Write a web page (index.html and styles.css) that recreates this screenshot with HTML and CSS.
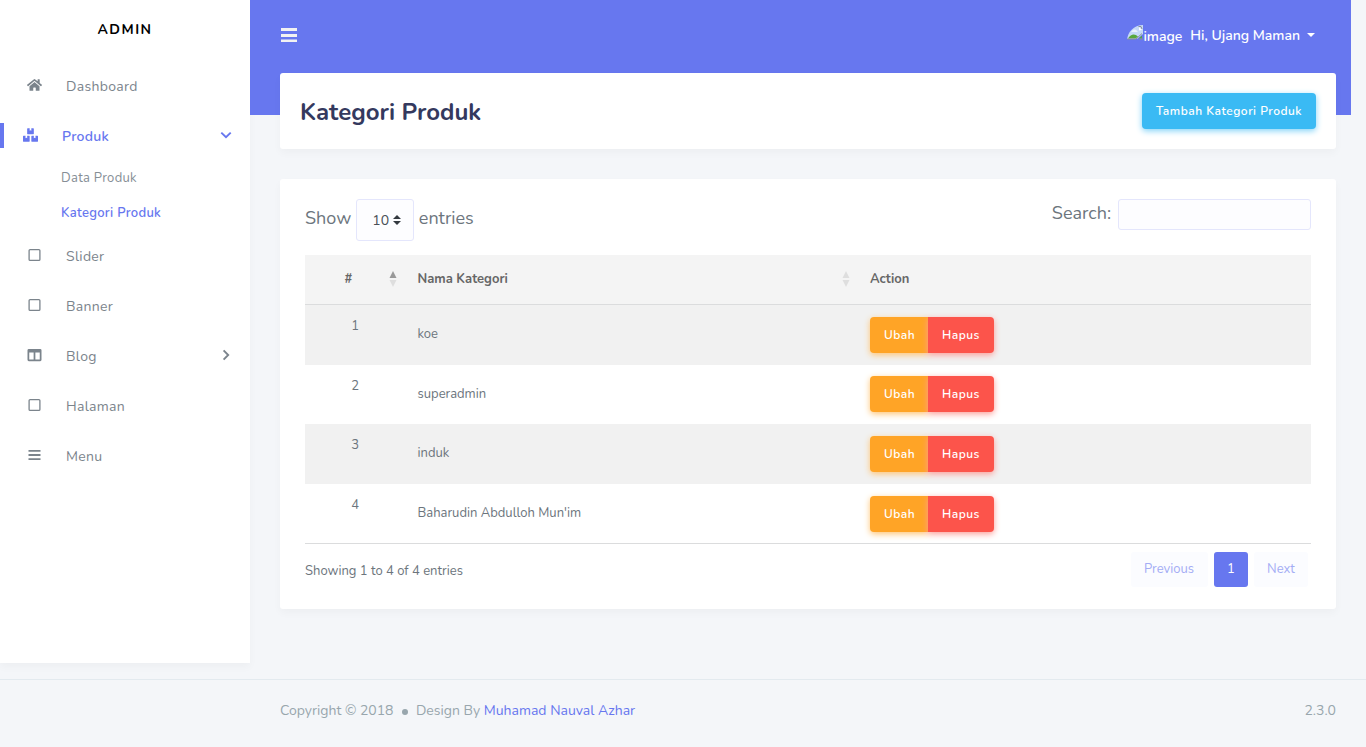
FILE: index.html
```html
<!DOCTYPE html>
<html lang="id">
<head>
<meta charset="utf-8">
<title>Kategori Produk</title>
<link rel="stylesheet" href="styles.css">
</head>
<body>
<div class="shell">
  <aside class="sidebar">
    <a class="brand">ADMIN</a>
    <nav class="menu">
      <a class="item"><svg class="icon" viewBox="0 0 576 512"><path d="M280 148 96 300v164a16 16 0 0 0 16 16h112a16 16 0 0 0 16-16v-96a16 16 0 0 1 16-16h64a16 16 0 0 1 16 16v96a16 16 0 0 0 16 16h112a16 16 0 0 0 16-16V300L296 148a12 12 0 0 0-16 0zM572 251l-84-69V44a12 12 0 0 0-12-12h-56a12 12 0 0 0-12 12v72l-90-74a48 48 0 0 0-61 0L4 251a12 12 0 0 0-1 17l25 31a12 12 0 0 0 17 2L280 107a12 12 0 0 1 15 0l236 194a12 12 0 0 0 17-2l25-31a12 12 0 0 0-1-17z"/></svg><span>Dashboard</span></a>
      <a class="item active"><svg class="icon" viewBox="0 0 576 512"><path d="M560 288h-80v96l-32-21-32 21v-96h-80a16 16 0 0 0-16 16v192a16 16 0 0 0 16 16h224a16 16 0 0 0 16-16V304a16 16 0 0 0-16-16zM176 224h224a16 16 0 0 0 16-16V16a16 16 0 0 0-16-16h-80v96l-32-21-32 21V0h-80a16 16 0 0 0-16 16v192a16 16 0 0 0 16 16zm64 64h-80v96l-32-21-32 21v-96H16a16 16 0 0 0-16 16v192a16 16 0 0 0 16 16h224a16 16 0 0 0 16-16V304a16 16 0 0 0-16-16z"/></svg><span>Produk</span><svg class="caret" viewBox="0 0 12 12"><path d="M1.3 3.6 6 8.2l4.7-4.6"/></svg></a>
      <a class="subitem">Data Produk</a>
      <a class="subitem current">Kategori Produk</a>
      <a class="item"><svg class="icon" viewBox="0 0 14 14"><rect class="line" x="1.6" y="1.6" width="10.8" height="10.8" rx="1"/></svg><span>Slider</span></a>
      <a class="item"><svg class="icon" viewBox="0 0 14 14"><rect class="line" x="1.6" y="1.6" width="10.8" height="10.8" rx="1"/></svg><span>Banner</span></a>
      <a class="item"><svg class="icon" viewBox="0 0 512 512"><path fill-rule="evenodd" d="M464 32H48a48 48 0 0 0-48 48v352a48 48 0 0 0 48 48h416a48 48 0 0 0 48-48V80a48 48 0 0 0-48-48zM224 416H64V160h160zm224 0H288V160h160z"/></svg><span>Blog</span><svg class="caret" viewBox="0 0 12 12"><path d="M3.6 1.3 8.2 6l-4.6 4.7"/></svg></a>
      <a class="item"><svg class="icon" viewBox="0 0 14 14"><rect class="line" x="1.6" y="1.6" width="10.8" height="10.8" rx="1"/></svg><span>Halaman</span></a>
      <a class="item"><svg class="icon" viewBox="0 0 14 14"><path d="M1 2h12v1.8H1zM1 6.1h12v1.8H1zM1 10.2h12V12H1z"/></svg><span>Menu</span></a>
    </nav>
  </aside>
  <main class="main">
    <header class="topbar">
      <svg class="burger" viewBox="0 0 18 16"><path d="M1 1h16v3H1zM1 7h16v3H1zM1 12.5h16v2.6H1z"/></svg>
      <div class="user">
        <svg class="avatar" viewBox="0 0 16 16"><defs><clipPath id="round"><path d="M16 0v16H0C0 7 7 0 16 0z"/></clipPath></defs><g clip-path="url(#round)"><path fill="#c5d9f7" d="M0 0h16v9l-6 5H0z"/><path fill="#e9f1fc" d="M5 6c1-2 4-2 5 0l1 1H4z"/><path fill="#57a83c" d="M1 13.5c3-5 7-5 10-2l-2.500 2zM12 13.500l3-3v3z"/><path fill="none" stroke="#8a9099" d="M0 14h9l6-5.500M12 14h4M11.500 1.500h2.500L15 4"/><path fill="#fff" d="m12 2 3 3-3 .5z"/></g></svg><span class="alt">image</span><span class="hello">Hi, Ujang Maman</span><i class="down"></i>
      </div>
    </header>
    <section class="card heading">
      <h1>Kategori Produk</h1>
      <a class="btn info">Tambah Kategori Produk</a>
    </section>
    <section class="card panel">
      <div class="tools">
        <div class="length"><span class="word">Show</span><span class="select"><span>10</span><svg class="updown" viewBox="0 0 8 10"><path d="M4 0l4 4H0zM4 10 0 6h8z"/></svg></span><span class="word">entries</span></div>
        <label class="search"><span>Search:</span><input type="text" class="field"></label>
      </div>
      <table class="grid">
        <thead><tr>
          <th class="num"><div class="headcell"><span>#</span><svg class="sort asc" viewBox="0 0 8 16"><path d="M4 0l3.5 7h-7z"/><path d="M4 16 .5 9h7z"/></svg></div></th>
          <th class="name"><div class="headcell"><span>Nama Kategori</span><svg class="sort" viewBox="0 0 8 16"><path d="M4 0l3.5 7h-7z"/><path d="M4 16 .5 9h7z"/></svg></div></th>
          <th>Action</th>
        </tr></thead>
        <tbody>
          <tr><td class="index">1</td><td class="label">koe</td><td><div class="group"><a class="btn warning">Ubah</a><a class="btn danger">Hapus</a></div></td></tr>
          <tr><td class="index">2</td><td class="label">superadmin</td><td><div class="group"><a class="btn warning">Ubah</a><a class="btn danger">Hapus</a></div></td></tr>
          <tr><td class="index">3</td><td class="label">induk</td><td><div class="group"><a class="btn warning">Ubah</a><a class="btn danger">Hapus</a></div></td></tr>
          <tr><td class="index">4</td><td class="label">Baharudin Abdulloh Mun'im</td><td><div class="group"><a class="btn warning">Ubah</a><a class="btn danger">Hapus</a></div></td></tr>
        </tbody>
      </table>
      <div class="below">
        <span class="summary">Showing 1 to 4 of 4 entries</span>
        <div class="pages"><a class="page prev">Previous</a><a class="page on">1</a><a class="page next">Next</a></div>
      </div>
    </section>
  </main>
</div>
<footer class="footer">
  <div class="credit"><span>Copyright © 2018</span><i class="bullet"></i><span>Design By</span><a class="author">Muhamad Nauval Azhar</a></div>
  <span>2.3.0</span>
</footer>
</body>
</html>
```

FILE: styles.css
```css
* { box-sizing: border-box; }
html { overflow: hidden; }
body { margin: 0; background: #f4f6f9; color: #6c757d; font: 400 14px/24px Nunito, Lato, sans-serif; white-space: nowrap; }
.shell { display: flex; height: 679px; }

.sidebar { width: 250px; height: 663px; background: #fff; box-shadow: 0 4px 8px rgba(0,0,0,.03); }
.brand { display: block; height: 61px; line-height: 59px; text-align: center; font-size: 14px; font-weight: 700; letter-spacing: 1.5px; color: #000; }
.menu { display: flex; flex-direction: column; }
.item { display: flex; align-items: center; height: 50px; padding: 0 18px 0 27px; color: #7b848c; letter-spacing: .3px; }
.item span { padding-top: 2px; }
.icon { width: 15px; height: 14px; margin: 0 24px 2px 0; fill: currentColor; overflow: visible; }
.line { fill: none; stroke: currentColor; stroke-width: 1.3; }
.caret { width: 12px; height: 12px; margin: 0 0 2px auto; fill: none; stroke: currentColor; stroke-width: 1.9; }
.active { padding-left: 0; color: #6777ef; font-weight: 600; }
.active::before { content: ""; width: 4px; height: 25px; margin: 0 19px 2px 0; background: #6777ef; }
.subitem { height: 35px; padding-left: 61px; font-size: 13px; line-height: 35px; color: #868e96; letter-spacing: .3px; }
.current { color: #6777ef; font-weight: 600; }

.main { width: 1116px; padding: 0 30px; background: linear-gradient(#6777ef, #6777ef) 0 0 / 1101px 115px no-repeat; }
.topbar { display: flex; justify-content: space-between; height: 73px; padding-right: 21px; color: #fff; }
.burger { width: 18px; height: 16px; margin-top: 27px; fill: #f2f2f2; }
.user { display: flex; height: 70px; align-items: center; font-weight: 600; }
.avatar { width: 16px; height: 16px; margin-bottom: 5px; }
.alt { margin-right: 8px; padding-top: 3px; }
.hello { padding-top: 1px; }
.down { margin-left: 7px; border: 4px solid transparent; border-top-color: #fff; border-bottom: 0; }
.card { background: #fff; border-radius: 3px; box-shadow: 0 4px 8px rgba(0,0,0,.03); }
.heading { display: flex; align-items: center; justify-content: space-between; height: 76px; padding: 0 20px; }
h1 { margin: 0; padding-top: 2px; font-size: 24px; line-height: 28px; font-weight: 700; color: #34395e; }
.btn { height: 36px; border-radius: 4px; font-size: 12px; line-height: 36px; font-weight: 600; letter-spacing: .5px; text-align: center; color: #fff; }
.info { width: 174px; background: #3abaf4; box-shadow: 0 2px 6px #82d3f8; }
.warning { width: 58px; padding-left: 1px; background: #ffa426; box-shadow: 0 2px 6px #ffc473; border-radius: 4px 0 0 4px; }
.danger { width: 66px; background: #fc544b; box-shadow: 0 2px 6px #fd9b96; border-radius: 0 4px 4px 0; }

.panel { height: 430px; margin-top: 30px; padding: 20px 25px; }
.tools { display: flex; justify-content: space-between; height: 56px; font-size: 18px; }
.length { display: flex; align-items: center; height: 42px; }
.word { padding-bottom: 4px; }
.select { display: flex; align-items: center; width: 58px; height: 42px; margin: 0 4.5px 0 5px; padding: 2px 0 0 15px; gap: 4px; font-size: 14px; color: #495057; background: #fdfdff; border: 1px solid #e4e6fc; border-radius: 3px; }
.updown { width: 8px; height: 10px; margin-bottom: 2px; fill: #343a40; }
.search { display: flex; gap: 7px; line-height: 28px; }
.field { width: 193px; height: 31px; background: #fdfdff; border: 1px solid #e4e6fc; border-radius: 3px; }
.grid { width: 100%; table-layout: fixed; border-collapse: separate; border-spacing: 0; border-bottom: 1px solid #dbdcdd; font-size: 13px; line-height: 20px; }
.grid th { height: 50px; padding: 0 12px 1px; text-align: left; font-weight: 700; color: #666; background: #f4f4f4; border-bottom: 1px solid #dbdcdd; }
.grid .num { width: 100.5px; padding-left: 39.5px; padding-right: 8.5px; }
.grid .name { width: 452.5px; padding-right: 8.5px; }
.headcell { display: flex; align-items: center; justify-content: space-between; }
.sort { width: 8px; height: 16px; fill: #dedede; }
.asc path:first-child { fill: #999; }
.grid td { height: 59.6px; padding: 0 12px; vertical-align: middle; }
.grid td.index { padding: 11px 0 0; text-align: center; vertical-align: top; }
.grid td.label { padding-bottom: 1.4px; }
.grid tr:nth-child(odd) td { background: #f1f1f1; }
.group { display: flex; }
.below { display: flex; justify-content: space-between; padding-top: 8px; font-size: 13px; }
.summary { padding-top: 7px; }
.pages { display: flex; gap: 6px; margin-right: 3px; }
.page { height: 35px; line-height: 35px; text-align: center; border-radius: 3px; background: #fbfcff; color: #a4adf5; }
.prev { width: 77px; padding-right: 1px; }
.on { width: 34px; background: #6777ef; color: #fff; }
.next { width: 54px; }

.footer { display: flex; justify-content: space-between; height: 68px; padding: 19px 30px 0 280px; border-top: 1px solid #e3eaef; color: #98a6ad; }
.credit { display: flex; align-items: center; height: 24px; }
.bullet { width: 6px; height: 6px; margin: 1px 8px 0 8.4px; border-radius: 50%; background: #98a6ad; }
.author { margin-left: 3.6px; color: #6777ef; }
```
